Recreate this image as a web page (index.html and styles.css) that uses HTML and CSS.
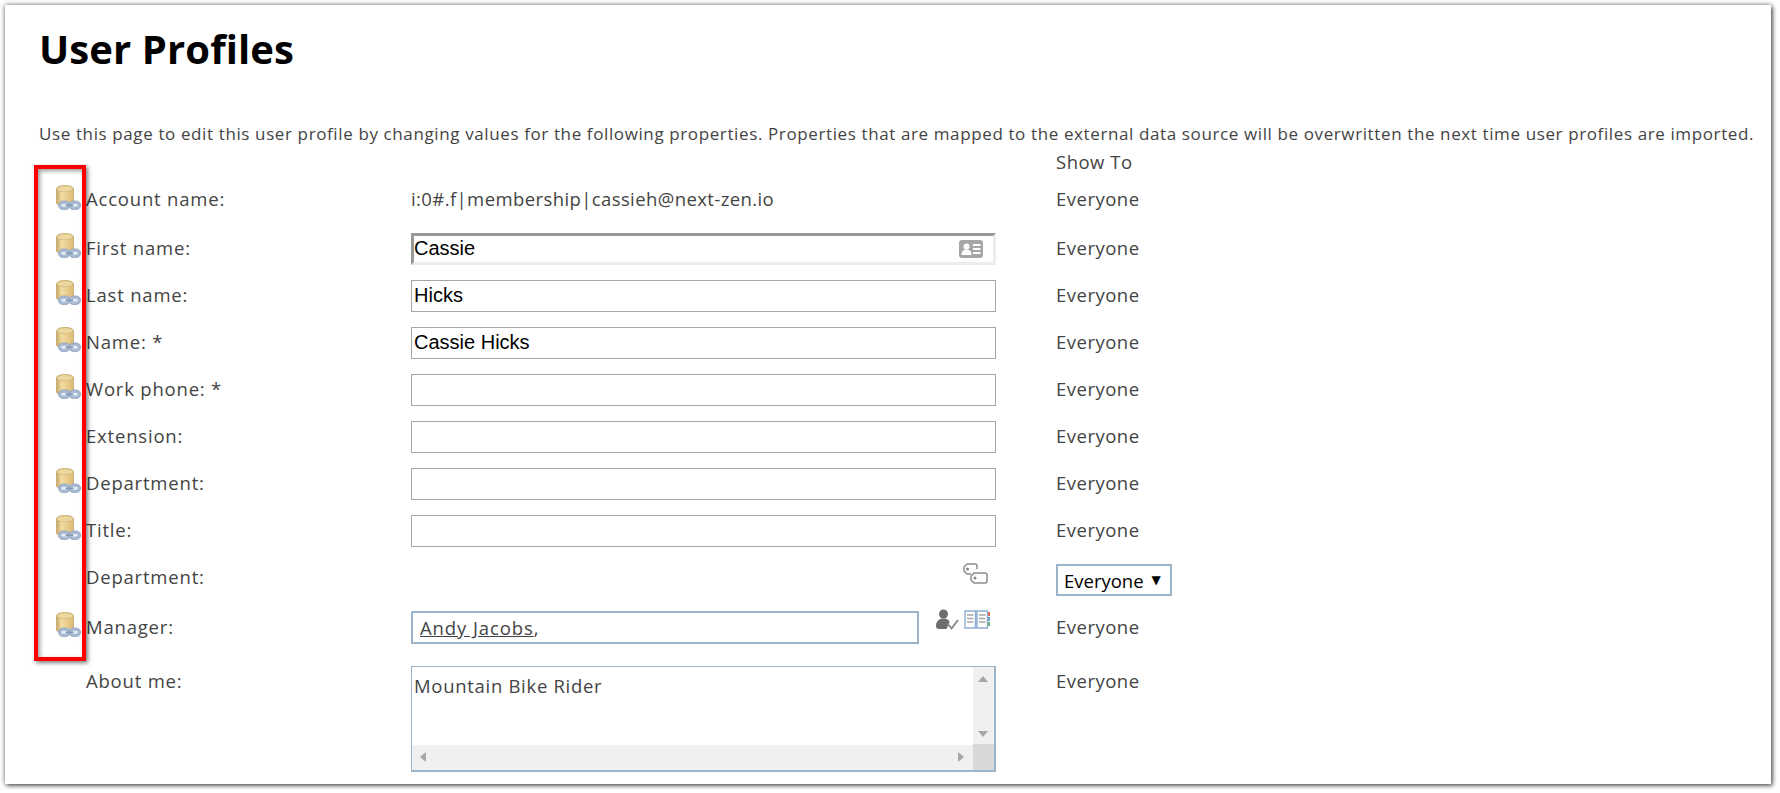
FILE: index.html
```html
<!DOCTYPE html>
<html lang="en">
<head>
<meta charset="utf-8">
<title>User Profiles</title>
<link rel="stylesheet" href="styles.css">
</head>
<body>
<svg class="defs" width="0" height="0" aria-hidden="true">
  <defs>
    <linearGradient id="cyl" x1="0" x2="1" y1="0" y2="0">
      <stop offset="0" stop-color="#c8a661"/>
      <stop offset="0.3" stop-color="#f3dca2"/>
      <stop offset="1" stop-color="#dcbb75"/>
    </linearGradient>
    <symbol id="db" viewBox="0 0 25 25">
      <path d="M.5 4c0-2.200 3.800-3.500 8.500-3.500s8.500 1.300 8.500 3.500v14c0 1.500-3.800 2.500-8.500 2.500S.5 19.500.5 18z" fill="url(#cyl)" stroke="#bfa56e" stroke-width=".8"/>
      <ellipse cx="9" cy="3.800" rx="8" ry="3" fill="#ecd79f" stroke="#cdb47c" stroke-width=".7"/>
      <rect x="2.500" y="16" width="11.500" height="8.500" rx="4.200" fill="#a9bad2" stroke="#8ea3bf" stroke-width=".8"/>
      <rect x="13" y="16" width="11.500" height="8.500" rx="4.200" fill="#a9bad2" stroke="#8ea3bf" stroke-width=".8"/>
      <rect x="5.500" y="19" width="5.500" height="2.500" rx="1.200" fill="#eaf0f7"/>
      <rect x="16" y="19" width="5.500" height="2.500" rx="1.200" fill="#eaf0f7"/>
      <rect x="9.500" y="19.500" width="8" height="1.500" rx=".7" fill="#8297b4"/>
    </symbol>
  </defs>
</svg>
<main class="sheet">
  <h1 class="title">User Profiles</h1>
  <p class="intro">Use this page to edit this user profile by changing values for the following properties. Properties that are mapped to the external data source will be overwritten the next time user profiles are imported.</p>
  <div class="form">
    <div class="row row-head"><span></span><span></span><span></span><span class="show">Show To</span></div>

    <div class="row row-account">
      <span class="ic"><svg class="db"><use href="#db"/></svg></span>
      <span class="label">Account name:</span>
      <span class="value">i:0#.f|membership|cassieh@next-zen.io</span>
      <span class="show">Everyone</span>
    </div>
    <div class="row">
      <span class="ic"><svg class="db"><use href="#db"/></svg></span>
      <span class="label">First name:</span>
      <span class="field field-first">Cassie
        <svg class="card" viewBox="0 0 24 18"><rect width="24" height="18" rx="3" fill="#a6a6a6"/><circle cx="7.500" cy="6.500" r="3" fill="#fff"/><path d="M2.500 15c0-4 2-5.500 5-5.500s5 1.500 5 5.500z" fill="#fff"/><path d="M14 4h7.500v2H14zM14 8h7.500v2H14zM14 12h7.500v2H14z" fill="#fff"/></svg>
      </span>
      <span class="show">Everyone</span>
    </div>
    <div class="row">
      <span class="ic"><svg class="db"><use href="#db"/></svg></span>
      <span class="label">Last name:</span>
      <span class="field">Hicks</span>
      <span class="show">Everyone</span>
    </div>
    <div class="row">
      <span class="ic"><svg class="db"><use href="#db"/></svg></span>
      <span class="label">Name: *</span>
      <span class="field">Cassie Hicks</span>
      <span class="show">Everyone</span>
    </div>
    <div class="row">
      <span class="ic"><svg class="db"><use href="#db"/></svg></span>
      <span class="label">Work phone: *</span>
      <span class="field"></span>
      <span class="show">Everyone</span>
    </div>
    <div class="row">
      <span class="ic"></span>
      <span class="label">Extension:</span>
      <span class="field"></span>
      <span class="show">Everyone</span>
    </div>
    <div class="row">
      <span class="ic"><svg class="db"><use href="#db"/></svg></span>
      <span class="label">Department:</span>
      <span class="field"></span>
      <span class="show">Everyone</span>
    </div>
    <div class="row">
      <span class="ic"><svg class="db"><use href="#db"/></svg></span>
      <span class="label">Title:</span>
      <span class="field"></span>
      <span class="show">Everyone</span>
    </div>
    <div class="row">
      <span class="ic"></span>
      <span class="label">Department:</span>
      <span class="value value-tags">
        <svg class="tags" viewBox="0 0 25 21" fill="none" stroke="#8c8c8c" stroke-width="1.500"><path d="M14 6V3c0-1-.6-2-2-2H4L1 4v4l3 3h4"/><path d="M11 10h11c1.200 0 2 .8 2 2v6c0 1.200-.8 2-2 2H11l-3-3v-4z" fill="#fff"/><circle cx="4.500" cy="6" r=".8"/><circle cx="12" cy="15" r=".8"/></svg>
      </span>
      <span class="select">Everyone<span class="arrow">▼</span></span>
    </div>
    <div class="row row-manager">
      <span class="ic"><svg class="db"><use href="#db"/></svg></span>
      <span class="label">Manager:</span>
      <span class="people">
        <span class="field field-blue field-manager"><span class="person">Andy Jacobs</span>,</span>
        <svg class="check" viewBox="0 0 23 22"><circle cx="7.500" cy="5" r="4.500" fill="#6e6e6e"/><path d="M0 17c0-5 3-7.500 7.500-7.500s6 2.500 6 4l-3 6.500H3c-2 0-3-1-3-3z" fill="#6e6e6e"/><path d="M11.500 14.500l4 5 6.500-8.500" fill="none" stroke="#8c8c8c" stroke-width="2"/></svg>
        <svg class="book" viewBox="0 0 26 21"><path d="M1 2h10.500v17H1zM13 2h10.500v17H13z" fill="#fff" stroke="#8fadd0" stroke-width="1.400"/><path d="M3 6h6.500M3 9.500h6.500M3 13h6.500M15 6h6.500M15 9.500h6.500M15 13h6.500" stroke="#a7a7a7" stroke-width="1.300"/><path d="M24 3h2v4h-2z" fill="#d9694f"/><path d="M24 8h2v4h-2z" fill="#6a9bd1"/><path d="M24 13h2v4h-2z" fill="#6fae7a"/></svg>
      </span>
      <span class="show">Everyone</span>
    </div>
    <div class="row row-about">
      <span class="ic"></span>
      <span class="label">About me:</span>
      <div class="area">
        <div class="area-main">
          <div class="area-text">Mountain Bike Rider</div>
          <div class="vbar"><span class="tri tri-up"></span><span class="tri tri-down"></span></div>
        </div>
        <div class="hbar"><span class="tri tri-left"></span><span class="tri tri-right"></span><span class="corner"></span></div>
      </div>
      <span class="show">Everyone</span>
    </div>
  </div>
  <div class="mark" aria-hidden="true"></div>
</main>
</body>
</html>
```
FILE: styles.css
```css
* { box-sizing: border-box; }
html, body { margin: 0; height: 100%; background: #fff; overflow: hidden; }
body { padding: 5px 9px 9px 5px; font-family: "Open Sans", "Noto Sans", sans-serif; color: #444; }
.defs { position: absolute; }
.sheet {
  position: relative;
  height: 779px;
  background: #fff;
  padding: 0 0 0 34px;
  box-shadow: 0 0 5px rgba(0,0,0,.55), 2px 2px 4px rgba(0,0,0,.45);
}
.title { margin: 0; padding-top: 18px; height: 116px; font-size: 40px; line-height: 52px; font-weight: 700; color: #000; letter-spacing: .1px; }
.intro { margin: 0; height: 25px; font-size: 17px; line-height: 25px; white-space: nowrap; letter-spacing: .615px; color: #444; }
.form { font-size: 18.500px; letter-spacing: .5px; }
.row { display: grid; grid-template-columns: 47px 325px 645px 1fr; height: 47px; align-items: center; }
.row-head { height: 29px; }
.row-head .show { margin-top: 3px; }
.row-account { height: 50px; }
.ic { display: flex; justify-content: flex-end; padding-right: 5px; height: 25px; align-items: flex-start; margin-top: -6px; }
.db { width: 25px; height: 25px; display: block; }
.label, .value, .show { line-height: 22px; margin-top: -2px; }
.label { letter-spacing: .8px; }
.value { letter-spacing: .4px; }
.field {
  display: flex; align-items: center; justify-content: space-between;
  width: 585px; height: 32px; padding: 0 2px;
  border: 1px solid #a6a6a6; background: #fff;
  font-family: "Liberation Sans", Arial, sans-serif; font-size: 20px; letter-spacing: 0; color: #000;
}
.field-first { border-color: #ededed; border-width: 3px; border-top-color: #999; border-left-color: #999; padding: 0; }
.card { width: 24px; height: 18px; margin-right: 10px; }
.value-tags { display: flex; justify-content: flex-end; padding-right: 68px; margin-top: -8px; }
.tags { width: 25px; height: 21px; }
.select {
  display: flex; align-items: center; gap: 8px; width: 116px; height: 32px; padding: 0 6px;
  border: 2px solid #9cb3c8; color: #000; font-size: 18.500px; letter-spacing: 0; margin-top: 5px;
}
.arrow { font-size: 12px; font-family: "DejaVu Sans", sans-serif; }
.row-manager { height: 53px; margin-bottom: 8px; }
.people { display: flex; align-items: flex-start; }
.field-blue { border: 2px solid #9cb3c8; justify-content: flex-start; padding: 0 0 0 7px; font-family: "Open Sans", sans-serif; font-size: 18.500px; letter-spacing: .9px; color: #444; }
.field-manager { width: 508px; height: 33px; }
.person { text-decoration: underline; }
.check { width: 23px; height: 22px; margin: -2px 0 0 17px; }
.book { width: 26px; height: 21px; margin: -2px 0 0 5px; }
.row-about { height: 110px; align-items: start; padding-top: 4px; }
.row-about .label, .row-about .show { margin-top: 0; padding-top: 4px; }
.area { width: 585px; height: 106px; border: 2px solid #9cb3c8; border-width: 1px 2px 2px 1px; display: flex; flex-direction: column; letter-spacing: .7px; }
.area-main { flex: 1; display: flex; min-height: 0; }
.area-text { flex: 1; padding: 7px 2px; line-height: 24px; }
.vbar { width: 21px; background: #f0f0f0; position: relative; }
.hbar { height: 25px; background: #f0f0f0; position: relative; }
.corner { position: absolute; right: 0; top: -1px; bottom: 0; width: 21px; background: #d8d8d8; }
.tri { position: absolute; width: 0; height: 0; border: 5px solid transparent; }
.tri-up { left: 5px; top: 9px; border-top: 0; border-bottom: 6px solid #a6a6a6; }
.tri-down { left: 5px; bottom: 8px; border-bottom: 0; border-top: 6px solid #a6a6a6; }
.tri-left { left: 8px; top: 7px; border-left: 0; border-right: 6px solid #a6a6a6; }
.tri-right { right: 30px; top: 7px; border-right: 0; border-left: 6px solid #a6a6a6; }
.mark { position: absolute; left: 29px; top: 160px; width: 52px; height: 496px; border: 4px solid #f00; box-shadow: 2px 2px 4px rgba(0,0,0,.5), inset 2px 2px 4px rgba(0,0,0,.4); }
```
